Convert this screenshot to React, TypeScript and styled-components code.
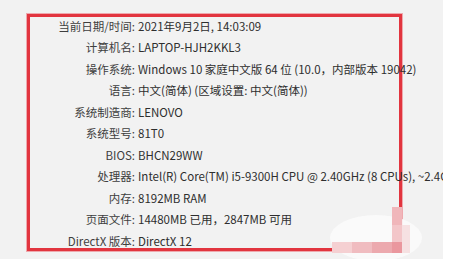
import styled, { createGlobalStyle } from "styled-components";

const GlobalStyle = createGlobalStyle`
  html, body {
    margin: 0;
    padding: 0;
    background: #ffffff;
  }
`;

const rows: [string, string][] = [
  ["当前日期/时间:", "2021年9月2日, 14:03:09"],
  ["计算机名:", "LAPTOP-HJH2KKL3"],
  ["操作系统:", "Windows 10 家庭中文版 64 位 (10.0，内部版本 19042)"],
  ["语言:", "中文(简体) (区域设置: 中文(简体))"],
  ["系统制造商:", "LENOVO"],
  ["系统型号:", "81T0"],
  ["BIOS:", "BHCN29WW"],
  ["处理器:", "Intel(R) Core(TM) i5-9300H CPU @ 2.40GHz (8 CPUs), ~2.4GHz"],
  ["内存:", "8192MB RAM"],
  ["页面文件:", "14480MB 已用，2847MB 可用"],
  ["DirectX 版本:", "DirectX 12"],
];

// pixelated watermark in the lower right corner
const blocks: { x: number; y: number; w: number; h: number; c: string }[] = [
  { x: 62, y: 0, w: 10, h: 18, c: "#f0b6ba" },
  { x: 62, y: 18, w: 10, h: 17, c: "#f3c6c9" },
  { x: 62, y: 35, w: 10, h: 11, c: "#ea979e" },
  { x: 72, y: 18, w: 8, h: 28, c: "#f6e1e2" },
  { x: 2, y: 35, w: 20, h: 11, c: "#f5d0d2" },
  { x: 22, y: 35, w: 20, h: 11, c: "#f0bcc0" },
  { x: 42, y: 35, w: 20, h: 11, c: "#eca9ae" },
];

export default function App() {
  return (
    <>
      <GlobalStyle />
      <Panel>
        <Frame>
          <InfoGrid>
            {rows.map(([label, value]) => (
              <Row key={label}>
                <Label>{label}</Label>
                <Value>{value}</Value>
              </Row>
            ))}
          </InfoGrid>
        </Frame>
        <Mosaic width="92" height="54" viewBox="0 0 92 54">
          <ellipse cx="46" cy="31" rx="46" ry="23" fill="rgba(252,252,252,0.85)" />
          {blocks.map((b, i) => (
            <rect key={i} x={b.x} y={b.y} width={b.w} height={b.h} fill={b.c} />
          ))}
        </Mosaic>
      </Panel>
    </>
  );
}

const Panel = styled.div`
  position: relative;
  width: 443px;
  height: 259px;
  background: #f2f2f2;
  overflow: hidden;
  padding: 14px 0 0 27px;
  box-sizing: border-box;
  font-family: "Noto Sans CJK SC", "Noto Sans", sans-serif;
`;

const Frame = styled.div`
  width: 375px;
  height: 237px;
  box-sizing: border-box;
  border: 3px solid #e2353f;
  box-shadow: 0 0 0 1px rgba(232, 80, 90, 0.45);
`;

const InfoGrid = styled.div`
  display: flex;
  flex-direction: column;
  margin-top: -2px;
`;

const Row = styled.div`
  display: grid;
  grid-template-columns: 105px auto;
  column-gap: 3px;
  height: 21.5px;
  align-items: center;
  font-size: 11.5px;
  white-space: nowrap;
`;

const Label = styled.span`
  text-align: right;
  color: #3e3e3e;
`;

const Value = styled.span`
  color: #2e2e2e;
`;

const Mosaic = styled.svg`
  position: absolute;
  left: 330px;
  top: 207px;
`;
